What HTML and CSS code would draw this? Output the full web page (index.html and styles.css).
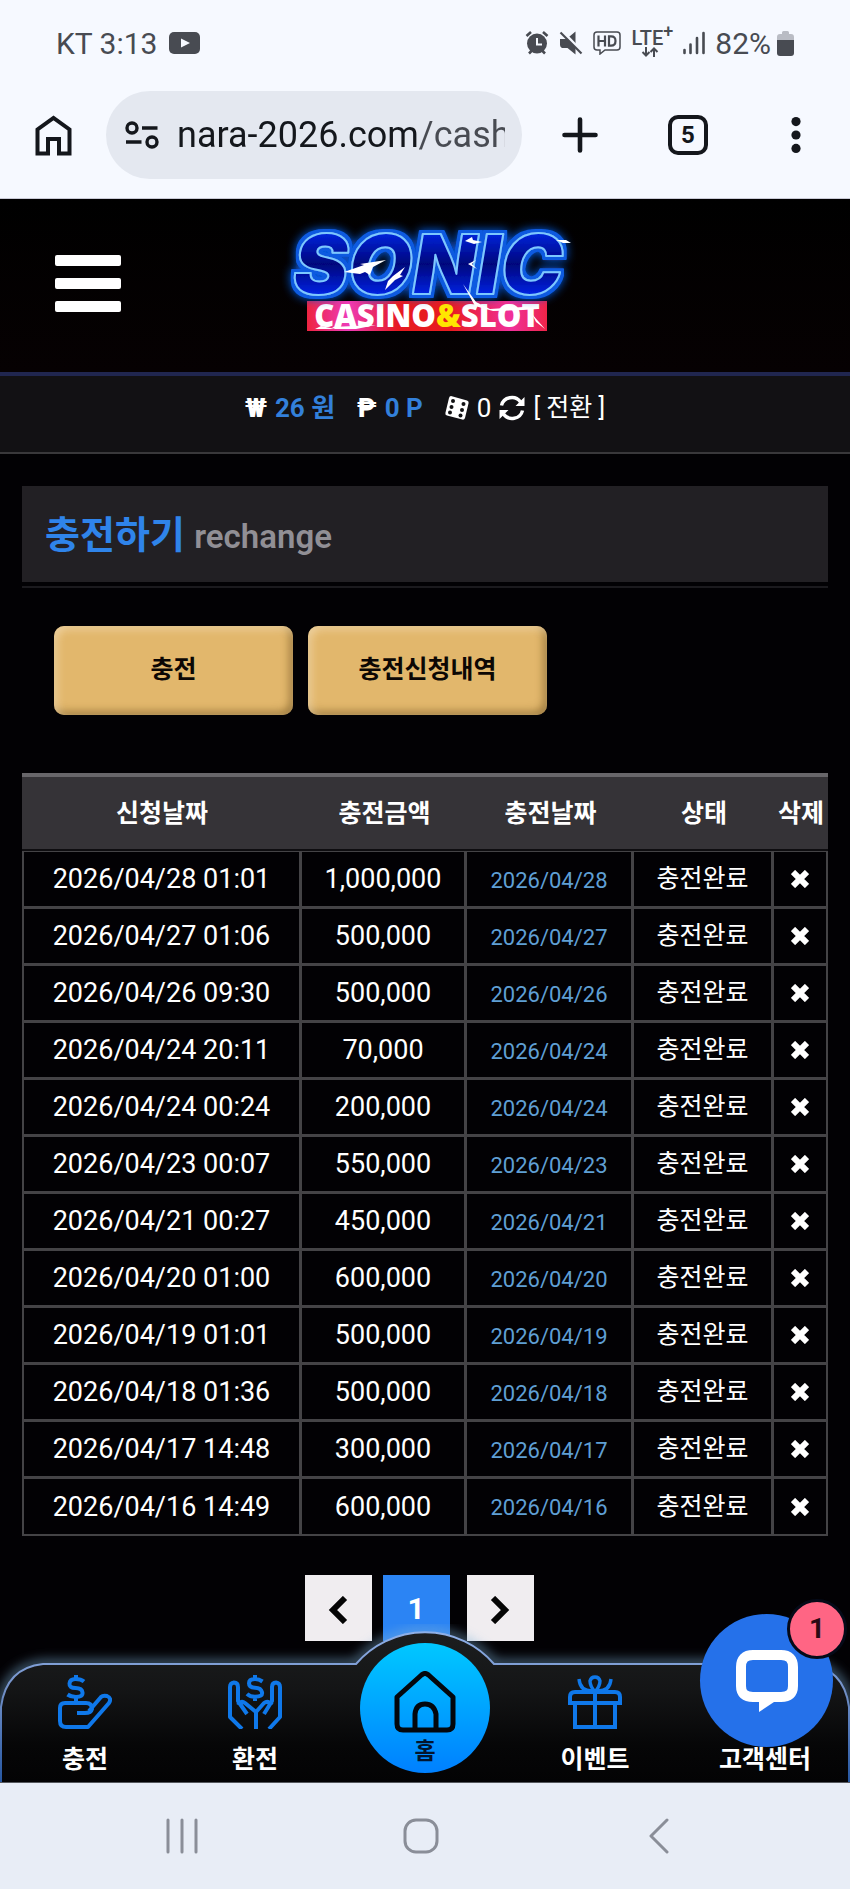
FILE: index.html
```html
<!DOCTYPE html>
<html lang="ko">

<head>
  <meta charset="UTF-8" />
  <meta name="viewport" content="width=device-width, initial-scale=1.0" />
  <title>충전하기</title>
  <link rel="stylesheet" href="styles.css">
</head>

<body>

  <!-- Phone status bar -->
  <div class="status-bar">
    <span>KT 3:13</span>
    <svg class="yt" width="31" height="22" viewBox="0 0 31 22">
      <rect width="31" height="22" rx="5" fill="#484b52" />
      <path d="M12 6.500l9 4.500-9 4.500z" fill="#f6f9ff" />
    </svg>
    <div class="status-icons">
      <svg width="24" height="24" viewBox="0 0 24 24" fill="none" stroke="#484b52">
        <circle cx="12" cy="12.500" r="10" fill="#484b52" stroke="none" />
        <path d="M1.500 5l4.500-4M22.500 5l-4.500-4M4 22.500l3-3M20 22.500l-3-3" stroke-width="2.600" />
        <path d="M12 7v6.500h5" stroke="#f6f9ff" stroke-width="2" />
      </svg>
      <svg width="24" height="24" viewBox="0 0 24 24">
        <path d="M1 8h6.500l9-7.500v23L8.500 17H3q-2-1-2-3z" fill="#484b52" />
        <path d="M3 0l21 22" stroke="#f6f9ff" stroke-width="3" />
        <path d="M1.500 1.500l21 21" stroke="#484b52" stroke-width="2.200" />
      </svg>
      <svg width="28" height="24" viewBox="0 0 28 24" fill="none" stroke="#484b52" stroke-width="1.500">
        <path d="M4 1h20q3 0 3 3v12q0 3-3 3H12l-5 4v-4H4q-3 0-3-3V4q0-3 3-3z" />
        <path d="M5.500 4.500v11M12 4.500v11M5.500 10H12M16 5.300v9.400h2q4.500 0 4.500-4.700T18 5.300z" stroke-width="2.200" />
      </svg>
      <span class="lte">
        <span>LTE<sup>+</sup></span>
        <svg width="18" height="10" viewBox="0 0 18 10" fill="none" stroke="#484b52" stroke-width="2">
          <path d="M5 0v8M1.500 5L5 8.500 8.500 5M13 10V2M9.500 5L13 1.500 16.500 5" />
        </svg>
      </span>
      <svg width="22" height="24" viewBox="0 0 22 24" stroke="#484b52" stroke-width="2.600" stroke-linecap="round">
        <path d="M1.500 19v3M7.500 13.500V22M14 7v15M20.500 2v20" />
      </svg>
      <span>82%</span>
      <svg width="17" height="25" viewBox="0 0 17 25">
        <path d="M3 3h2V1.500Q5 0 6.500 0h4Q12 0 12 1.500V3h2q3 0 3 3v3H0V6q0-3 3-3z" fill="#b9bcc4" />
        <path d="M0 9h17v13q0 3-3 3H3q-3 0-3-3z" fill="#484b52" />
      </svg>
    </div>
  </div>

  <!-- Browser toolbar -->
  <div class="toolbar">
    <button class="tool" aria-label="Home">
      <svg width="37" height="41" viewBox="0 0 37 41" fill="none" stroke="#14171c" stroke-width="4">
        <path d="M2.500 38.500V14.500L18.500 3l16 11.500v24H24V24H13v14.500z" />
      </svg>
    </button>
    <label class="address">
      <svg width="34" height="28" viewBox="0 0 34 28" fill="none" stroke="#14171c" stroke-width="3.400">
        <circle cx="7" cy="7" r="5" />
        <circle cx="27" cy="21" r="5" />
        <path d="M17 7h15.500M1 21h15.500" />
      </svg>
      <input type="text" value="nara-2026.com/cash" aria-label="Address">
    </label>
    <div class="tool-group">
      <button class="tool" aria-label="New tab">
        <svg width="36" height="36" viewBox="0 0 36 36" stroke="#14171c" stroke-width="4.600" stroke-linecap="round">
          <path d="M18 2.500v31M2.500 18h31" />
        </svg>
      </button>
      <button class="tool tabs">5</button>
      <button class="tool" aria-label="Menu">
        <svg width="10" height="36" viewBox="0 0 10 36" fill="#14171c">
          <circle cx="5" cy="4.600" r="4.600" />
          <circle cx="5" cy="18" r="4.600" />
          <circle cx="5" cy="31.400" r="4.600" />
        </svg>
      </button>
    </div>
  </div>

  <!-- Site header -->
  <header class="site-header">
    <button class="menu-btn" aria-label="메뉴"><span></span><span></span><span></span></button>
    <a href="#" class="logo" aria-label="Sonic Casino &amp; Slot">
      <svg width="330" height="140" viewBox="0 0 330 140">
        <defs>
          <linearGradient id="letter" x1="0" y1="0" x2="0" y2="1">
            <stop offset=".15" stop-color="#0428e8" />
            <stop offset=".5" stop-color="#02067c" />
            <stop offset=".8" stop-color="#0222e0" />
          </linearGradient>
          <linearGradient id="banner">
            <stop offset="0" stop-color="#ee2440" />
            <stop offset=".17" stop-color="#ee3bb8" />
            <stop offset=".38" stop-color="#e61a20" />
            <stop offset=".6" stop-color="#e81c20" />
            <stop offset=".85" stop-color="#f0309a" />
            <stop offset="1" stop-color="#ee2448" />
          </linearGradient>
          <filter id="neon" x="-10%" y="-20%" width="120%" height="140%">
            <feMorphology in="SourceAlpha" operator="dilate" radius="3" result="wide" />
            <feFlood flood-color="#0a5ae0" />
            <feComposite in2="wide" operator="in" result="edge" />
            <feGaussianBlur in="edge" stdDeviation="5" result="halo" />
            <feMerge>
              <feMergeNode in="halo" />
              <feMergeNode in="edge" />
              <feMergeNode in="SourceGraphic" />
            </feMerge>
          </filter>
        </defs>
        <rect x="47" y="91" width="240" height="30" fill="url(#banner)" />
        <text class="logo-sub" x="167" y="117">CASINO<tspan fill="#ffe600">&amp;</tspan>SLOT</text>
        <text class="logo-main" x="168" y="84" fill="url(#letter)" stroke="#7cc8ff" stroke-width="2"
          filter="url(#neon)">SONIC</text>
        <g fill="#fff">
          <path d="M84 62l20-7-4-1 26-4-13 7-3 8-5-3-5 2z" />
          <path d="M125 80l3-9 5-5 12-9-5 8 3 1-8 4z" />
          <path d="M205 31l7-4 1 3 9 2-8 2z" />
          <path d="M203 74l13 18 14 7 33-2 15 2-15 1-30 1-18-5z" />
          <path d="M216 50l-4 4 5 5-9-5z" />
          <path d="M55 119l6-3 14 3-3-2 44-2-20 4z" />
          <path d="M272 104l13 15-9-7z" />
          <path d="M296 30l10 0 5 3-8 0z" />
        </g>
      </svg>
    </a>
  </header>

  <div class="balance">
    <span class="cash"><b>₩</b> 26 원</span>
    <span class="point"><b>₱</b> 0 P</span>
    <span class="game">
      <svg width="24" height="24" viewBox="0 0 24 24">
        <path d="M6 0l16 4.500q2 .8 1.600 2.500L20 22q-.8 2-2.600 1.600L2 19.500Q0 19 .4 17L4 2q.5-2 2-2z" fill="#fff" />
        <g fill="#121214">
          <circle cx="8" cy="5" r="2" />
          <circle cx="6.500" cy="11" r="2" />
          <circle cx="5" cy="16.500" r="2" />
          <circle cx="18.500" cy="8" r="2" />
          <circle cx="17" cy="14" r="2" />
          <circle cx="15.500" cy="19.500" r="2" />
        </g>
      </svg>
      <span>0</span>
      <svg width="26" height="26" viewBox="0 0 26 26" fill="none" stroke="#fff" stroke-width="3.400">
        <path d="M2.500 10.500A10.500 10 0 0 1 21.500 7M23.500 15.500A10.500 10 0 0 1 4.500 19" />
        <path d="M25.500 2v9h-9zM.5 24v-9h9z" fill="#fff" stroke="none" />
      </svg>
      <a href="#">[ 전환 ]</a>
    </span>
  </div>

  <!-- Recharge history -->
  <main>
    <h1 class="page-title">충전하기 <small>rechange</small></h1>

    <div class="actions">
      <button class="gold-btn">충전</button>
      <button class="gold-btn">충전신청내역</button>
    </div>

    <table>
      <thead>
        <tr>
          <th class="c-date">신청날짜</th>
          <th class="c-amount">충전금액</th>
          <th class="c-done">충전날짜</th>
          <th class="c-state">상태</th>
          <th class="c-del">삭제</th>
        </tr>
      </thead>
      <tbody id="history"></tbody>
    </table>

    <div class="paging">
      <button class="page" aria-label="이전">
        <svg width="20" height="28" viewBox="0 0 20 28" fill="none" stroke="#050505" stroke-width="6">
          <path d="M17 2L5 14l12 12" />
        </svg>
      </button>
      <button class="page current">1</button>
      <button class="page next" aria-label="다음">
        <svg width="20" height="28" viewBox="0 0 20 28" fill="none" stroke="#050505" stroke-width="6">
          <path d="M3 2l12 12L3 26" />
        </svg>
      </button>
    </div>
  </main>

  <!-- Bottom menu -->
  <nav class="bottom-nav">
    <svg class="nav-shape" viewBox="0 0 850 158" preserveAspectRatio="none">
      <defs>
        <linearGradient id="navFill" x1="0" y1="0" x2="0" y2="1">
          <stop offset="0" stop-color="#1c1e1f" />
          <stop offset=".35" stop-color="#141516" />
          <stop offset=".7" stop-color="#060607" />
          <stop offset="1" stop-color="#020203" />
        </linearGradient>
        <linearGradient id="navLine" x1="0" y1="0" x2="0" y2="1">
          <stop offset="0" stop-color="#8fb0e8" />
          <stop offset=".35" stop-color="#7391c8" />
          <stop offset="1" stop-color="#1c4f9c" />
        </linearGradient>
        <filter id="navGlow" x="-5%" y="-20%" width="110%" height="140%">
          <feGaussianBlur stdDeviation="6" />
        </filter>
      </defs>
      <path d="M1 170V83Q6 44 43 40H356A91 91 0 0 1 494 40H807Q844 44 849 83V170" fill="none" stroke="#7fb2d8"
        stroke-width="7" opacity=".7" filter="url(#navGlow)" />
      <path d="M1 170V83Q6 44 43 40H356A91 91 0 0 1 494 40H807Q844 44 849 83V170" fill="url(#navFill)"
        stroke="url(#navLine)" stroke-width="2" />
    </svg>

    <a href="#">
      <svg width="54" height="54" viewBox="0 0 54 54" fill="none" stroke="#0f78ea" stroke-width="4"
        stroke-linejoin="round">
        <path d="M26 6.500Q23 4 17.500 4t-6 4.500 6 4.500 7 4.500-6.500 4.500Q13 22 9.500 19.500M18 0v4M18 22v4" />
        <path d="M19 38h8q6 0 7-4 0-6-6-6H7q-5 0-5 5v13q0 6 6 6h22l21-24q3-5-2-7-4-1-6 1L31 36" />
      </svg>
      충전
    </a>
    <a href="#">
      <svg width="54" height="54" viewBox="0 0 54 54" fill="none" stroke="#0f78ea" stroke-width="4"
        stroke-linejoin="round">
        <path d="M34.500 6.500Q31 4 27 4q-6 0-6 4.300t6 4.400 7 4.600-7 4.500q-5 0-8-3M27 0v4M27 22v4" />
        <path d="M14 54L2 42V12q0-4 4-4.500 4 0 4 4.500v14l9 13M10 30q3-5 7-2l11 9v17" />
        <path d="M41 54l11-12V12q0-4-4-4.500-4 0-4 4.500v14L36 39M44 30q-4-5-8-2l-8 9" />
      </svg>
      환전
    </a>
    <a href="#" class="home">
      <svg width="62" height="62" viewBox="0 0 62 62" fill="none" stroke="#03070d" stroke-width="5"
        stroke-linejoin="round">
        <path d="M27.500 4q3.500-3 7 0L59 26v27q0 6-6 6H9q-6 0-6-6V26z" />
        <path d="M21 59V43q1-10 10-10t11 10v16" />
      </svg>
      홈
    </a>
    <a href="#">
      <svg width="54" height="54" viewBox="0 0 54 54" fill="none" stroke="#0f78ea" stroke-width="4">
        <path d="M2 30V22q0-5 5-5h40q5 0 5 5v6H2M7 30v22h40V30M27 17v35" />
        <path d="M27 17q-5-6-5-11 1-4 5-4t5 4q0 5-5 11zM24 16q-12 0-13-12M30 16q12 0 13-12" stroke-width="3.400" />
      </svg>
      이벤트
    </a>
    <a href="#">
      <span class="icon-space"></span>
      고객센터
    </a>

    <button class="chat" aria-label="채팅 상담">
      <svg width="62" height="62" viewBox="0 0 62 62" fill="none" stroke="#fff" stroke-width="10">
        <path d="M23 47h-6Q5 47 5 36V17Q5 5 17 5h28q12 0 12 12v19q0 11-12 11h-7" />
        <path d="M23 42h17l7 4-9 6-15 10z" fill="#fff" stroke="none" />
      </svg>
      <span class="badge">1</span>
    </button>
  </nav>

  <!-- Phone navigation buttons -->
  <div class="system-nav">
    <button aria-label="Recents">
      <svg width="36" height="36" viewBox="0 0 36 36" stroke="#8a8e98" stroke-width="3" stroke-linecap="round">
        <path d="M4 2v32M18 2v32M32 2v32" />
      </svg>
    </button>
    <button aria-label="Home">
      <svg width="36" height="36" viewBox="0 0 36 36" fill="none" stroke="#8a8e98" stroke-width="3">
        <rect x="2" y="2" width="32" height="32" rx="11" />
      </svg>
    </button>
    <button aria-label="Back">
      <svg width="36" height="36" viewBox="0 0 36 36" fill="none" stroke="#8a8e98" stroke-width="3"
        stroke-linecap="round" stroke-linejoin="round">
        <path d="M26 2L10 18l16 16" />
      </svg>
    </button>
  </div>

  <script>
    const rows = [
      ["2026/04/28", "01:01", "1,000,000"],
      ["2026/04/27", "01:06", "500,000"],
      ["2026/04/26", "09:30", "500,000"],
      ["2026/04/24", "20:11", "70,000"],
      ["2026/04/24", "00:24", "200,000"],
      ["2026/04/23", "00:07", "550,000"],
      ["2026/04/21", "00:27", "450,000"],
      ["2026/04/20", "01:00", "600,000"],
      ["2026/04/19", "01:01", "500,000"],
      ["2026/04/18", "01:36", "500,000"],
      ["2026/04/17", "14:48", "300,000"],
      ["2026/04/16", "14:49", "600,000"]
    ];

    document.getElementById("history").innerHTML = rows.map(([date, time, amount]) => `
      <tr>
        <td>${date} ${time}</td>
        <td>${amount}</td>
        <td class="done">${date}</td>
        <td class="state">충전완료</td>
        <td>
          <button class="delete" aria-label="삭제">
            <svg width="18" height="18" viewBox="0 0 18 18" stroke="#fff" stroke-width="6">
              <path d="M2 2l14 14M16 2L2 16" />
            </svg>
          </button>
        </td>
      </tr>`).join("");
  </script>
</body>

</html>
```
FILE: styles.css
```css
* {
  margin: 0;
  padding: 0;
  box-sizing: border-box;
}

body {
  background-color: #020104;
  color: #fff;
  font-family: Roboto, "Noto Sans CJK KR", sans-serif;
  font-size: 27px;
}

button {
  border: none;
  background: none;
  color: inherit;
  font-family: inherit;
  cursor: pointer;
}

a {
  color: inherit;
  text-decoration: none;
}

svg {
  display: block;
  flex-shrink: 0;
}

/* phone + browser bars */
.status-bar {
  display: flex;
  align-items: center;
  height: 86px;
  padding: 0 56px;
  background-color: #f6f9ff;
  color: #484b52;
  font-size: 30px;
}

.yt {
  margin-left: 12px;
}

.status-icons {
  display: flex;
  align-items: center;
  gap: 10px;
  margin-left: auto;
}

.status-icons svg:last-child {
  margin-left: -4px;
}

.lte {
  display: flex;
  flex-direction: column;
  align-items: center;
  font-size: 20px;
  font-weight: 500;
  line-height: 18px;
}

.lte sup {
  font-size: 18px;
  line-height: 0;
}

.toolbar {
  display: flex;
  align-items: center;
  padding: 5px 0 19px 35px;
  background-color: #f6f9ff;
  border-bottom: 1px solid #c9cad6;
}

.tool {
  display: flex;
  align-items: center;
  justify-content: center;
}

.address {
  display: flex;
  flex: 1;
  align-items: center;
  gap: 18px;
  min-width: 0;
  height: 88px;
  margin: 0 4px 0 34px;
  padding: 0 17px 0 19px;
  border-radius: 44px;
  background-color: #e4e8f0;
}

.address input {
  flex: 1;
  min-width: 0;
  border: none;
  outline: none;
  background: linear-gradient(to right, #14171c 243px, #484b52 243px);
  -webkit-background-clip: text;
  background-clip: text;
  color: transparent;
  font-family: inherit;
  font-size: 36px;
}

.tool-group {
  display: grid;
  grid-template-columns: repeat(3, 108px);
  justify-items: center;
}

.tabs {
  width: 40px;
  height: 40px;
  border: 4px solid #14171c;
  border-radius: 10px;
  color: #14171c;
  font-size: 24px;
  font-weight: 700;
}

/* site header */
.site-header {
  display: grid;
  grid-template-columns: 1fr auto 1fr;
  align-items: start;
  height: 177px;
  padding: 11px 55px 0;
  background: linear-gradient(#000, #060102);
  border-bottom: 4px solid #20264f;
}

.menu-btn {
  display: flex;
  flex-direction: column;
  gap: 12px;
  width: 66px;
  margin-top: 45px;
}

.menu-btn span {
  height: 11px;
  border-radius: 2px;
  background-color: #fff;
}

.logo-main {
  font-family: Inter, sans-serif;
  font-size: 83px;
  font-style: italic;
  font-weight: 900;
  stroke-linejoin: round;
  text-anchor: middle;
}

.logo-sub {
  fill: #fff;
  font-family: "Open Sans", sans-serif;
  font-size: 31px;
  font-weight: 800;
  text-anchor: middle;
}

.balance {
  display: flex;
  justify-content: center;
  align-items: flex-start;
  gap: 22px;
  height: 78px;
  padding-top: 16px;
  background-color: #121114;
  border-bottom: 2px solid #39383b;
  font-size: 26px;
  line-height: 32px;
}

.cash,
.point {
  display: flex;
  gap: 8px;
  color: #3380da;
  font-weight: 700;
}

.balance b {
  color: #fff;
  font-weight: 900;
}

.game {
  display: flex;
  align-items: center;
  gap: 8px;
}

.game a {
  font-size: 25px;
}

/* content */
main {
  padding: 32px 22px 0;
}

.page-title {
  height: 96px;
  padding-left: 23px;
  background-color: #222024;
  box-shadow: 0 4px #020104, 0 6px #1b1a1e;
  color: #2f84ea;
  font-size: 38px;
  font-weight: 700;
  line-height: 98px;
}

.page-title small {
  color: #918f95;
  font-size: 33px;
  font-weight: 600;
}

.actions {
  display: flex;
  gap: 15px;
  padding: 44px 32px 58px;
}

.gold-btn {
  width: 239px;
  height: 89px;
  padding-bottom: 7px;
  border-radius: 10px;
  background-color: #e2b76c;
  box-shadow: inset 3px 3px 8px rgba(255, 235, 200, 0.6), inset -3px -3px 8px rgba(100, 70, 20, 0.6);
  color: #0c0704;
  font-size: 25px;
  font-weight: 700;
}

table {
  width: 100%;
  border-collapse: separate;
  border-spacing: 0;
  table-layout: fixed;
  text-align: center;
}

.c-date {
  width: 280px;
}

.c-amount {
  width: 165px;
}

.c-done {
  width: 167px;
}

.c-state {
  width: 140px;
}

.c-del {
  width: 54px;
}

th {
  height: 78px;
  padding-bottom: 4px;
  border-top: 4px solid #68666a;
  border-bottom: 2px solid #0e0d10;
  background-color: #353337;
  font-size: 25px;
  font-weight: 700;
  white-space: nowrap;
}

td {
  height: 57px;
  border-right: 3px solid #444346;
  border-bottom: 3px solid #444346;
}

td:first-child {
  border-left: 2px solid #444346;
}

td:last-child {
  border-right-width: 2px;
}

tr:first-child td {
  height: 58px;
  border-top: 1px solid #444346;
}

tr:last-child td {
  border-bottom-width: 2px;
}

.done {
  padding-top: 2px;
  color: #5f9fd4;
  font-size: 22px;
}

.state {
  font-size: 25px;
  line-height: 32px;
}

.delete {
  display: block;
  margin: 0 auto;
}

.paging {
  display: flex;
  justify-content: center;
  gap: 11px;
  padding: 39px 12px 23px 0;
}

.page {
  display: flex;
  align-items: center;
  justify-content: center;
  width: 67px;
  height: 66px;
  padding-top: 4px;
  background-color: #f0edf0;
}

.page.current {
  padding-top: 0;
  background-color: #2b84f4;
  font-size: 30px;
  font-weight: 700;
}

.page.next {
  margin-left: 6px;
}

/* bottom menu */
.bottom-nav {
  position: relative;
  display: grid;
  grid-template-columns: repeat(5, 1fr);
  height: 118px;
}

.nav-shape {
  position: absolute;
  top: -40px;
  left: 0;
  width: 100%;
  height: 158px;
}

.bottom-nav a {
  position: relative;
  display: flex;
  flex-direction: column;
  align-items: center;
  gap: 15px;
  padding-top: 11px;
  font-size: 25px;
  font-weight: 700;
  line-height: 32px;
}

.icon-space {
  height: 54px;
}

.bottom-nav .home {
  justify-self: center;
  gap: 3px;
  width: 130px;
  height: 130px;
  margin-top: -21px;
  padding-top: 28px;
  border-radius: 50%;
  background: linear-gradient(#00c8ff, #0080ff);
  color: #03152e;
  font-size: 23px;
}

.chat {
  position: absolute;
  right: 17px;
  bottom: 35px;
  display: flex;
  align-items: center;
  justify-content: center;
  width: 133px;
  height: 133px;
  border-radius: 50%;
  background-color: #2571ea;
}

.badge {
  position: absolute;
  top: -15px;
  right: -14px;
  width: 60px;
  height: 60px;
  border: 3px solid #050a18;
  border-radius: 50%;
  background-color: #ff6584;
  color: #2a0a14;
  font-size: 28px;
  font-weight: 700;
  line-height: 54px;
}

.system-nav {
  display: flex;
  justify-content: space-between;
  align-items: center;
  height: 107px;
  padding: 0 173px 0 164px;
  background-color: #e8edf6;
  border-top: 1px solid #55585e;
}
```
